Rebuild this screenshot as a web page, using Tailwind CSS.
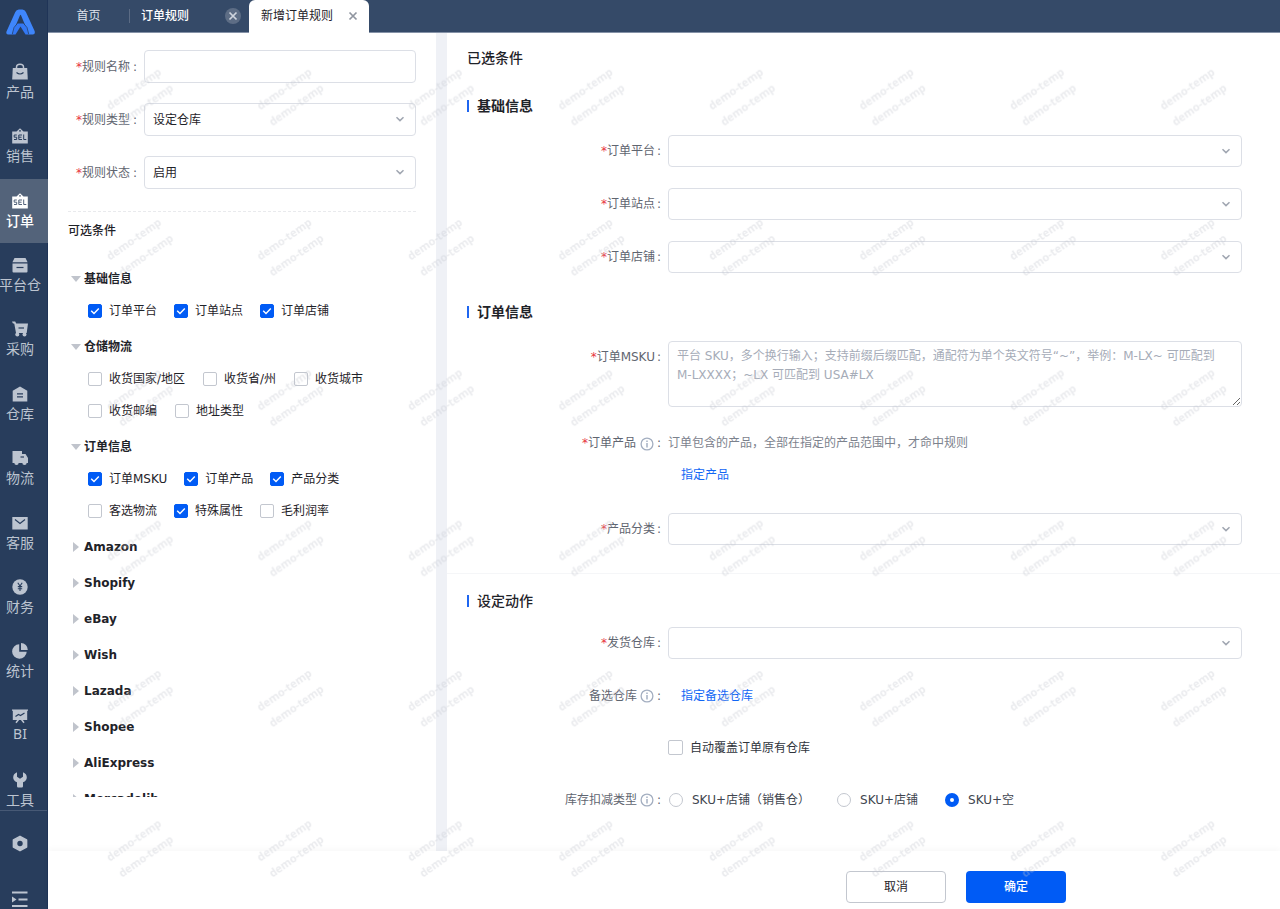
<!DOCTYPE html>
<html lang="zh-CN">
<head>
<meta charset="utf-8">
<meta name="viewport" content="width=device-width, initial-scale=1">
<title>新增订单规则</title>
<script src="https://cdn.jsdelivr.net/npm/@tailwindcss/browser@4"></script>
</head>
<body class="h-screen overflow-hidden bg-white font-['DejaVu_Sans','Noto_Sans_CJK_SC',sans-serif] text-xs text-[#1f2329]">

<svg class="hidden" aria-hidden="true">
  <symbol id="chev" viewBox="0 0 10 10"><path d="M1.5 3.2 5 6.6 8.5 3.2" fill="none" stroke="#a0a6b1" stroke-width="1.5"/></symbol>
  <symbol id="tick" viewBox="0 0 14 14"><path d="M3.2 6.8 6 9.6 10.8 4.6" fill="none" stroke="#fff" stroke-width="1.4"/></symbol>
  <symbol id="info" viewBox="0 0 14 14"><circle cx="7" cy="7" r="5.9" fill="none" stroke="#a3aec0" stroke-width="1.3"/><path d="M7 6v4.4M7 3.6v1.3" stroke="#98a5ba" stroke-width="1.3"/></symbol>
  <symbol id="down" viewBox="0 0 10 6"><path d="M0 0h10L5 6z" fill="#c0c4cc"/></symbol>
  <symbol id="right" viewBox="0 0 6 10"><path d="M0 0v10l6-5z" fill="#c0c4cc"/></symbol>
  <symbol id="cross" viewBox="0 0 10 10"><path d="M1.5 1.5l7 7M8.5 1.5l-7 7" fill="none" stroke="currentColor" stroke-width="1.7"/></symbol>
</svg>

<div class="flex h-full">
  <!-- Main navigation -->
  <aside class="flex w-12 shrink-0 flex-col border-r border-[#1f3457] bg-[#283d5c] text-sm leading-5 text-[#bcc4d0]">
    <a href="#" aria-label="首页" class="flex h-[50px] shrink-0 items-start px-[6px] pt-[9px]">
      <svg class="h-[26px] w-[29px]" viewBox="0 0 29 26"><path d="M0.5 22.5 9.300 3Q10.300 .5 12.800 .5h3.600q2.400 0 3.500 2.500L28.600 22q1 3.500-1.800 3.500h-3.800L15.100 6.400q-.6-1.200-1.200 0L6 25.500H2Q-.3 25.500.5 22.500z" fill="#3f86fb"/><path d="M6 25.500 7.800 18.500 11.500 14.500h6l3.700 4 1.800 7h-3.500l-5-8-5 8z" fill="#3378f4"/><path d="M11.300 14.500 8 18.500 6.300 25M17.700 14.500 21 18.500 22.700 25" fill="none" stroke="#283d5c" stroke-width=".7"/></svg>
    </a>
    <nav class="flex min-h-0 flex-1 flex-col justify-between">
      <a href="#" class="flex h-16 flex-col items-center pt-[13px] pr-[7px]"><svg class="h-[17px] w-4 shrink-0" viewBox="0 0 16 17" fill="currentColor"><path d="M0.800 5h14.400l.6 11.500H.2z"/><path d="M4.500 6V4.200a3.500 3 0 0 1 7 0V6" fill="none" stroke="currentColor" stroke-width="1.500"/><path d="M4.500 9.500q3.500 3 7 0" fill="none" stroke="#283d5c" stroke-width="1.200"/></svg><span class="mt-[2px]">产品</span></a>
      <a href="#" class="flex h-16 flex-col items-center pt-[13px] pr-[7px]"><svg class="h-[17px] w-4 shrink-0" viewBox="0 0 16 17" fill="currentColor"><path d="M.2 4.500h4.300L8 1.200l3.500 3.300h4.300v12H.2z"/><circle cx="8" cy="3.800" r=".9" fill="#283d5c"/><path d="M4.800 8H2.200v2.200h2.500v2.300H2M10 8H6.800v4.500H10M6.800 10.200h2.700M11.700 7.500v5h2.600" fill="none" stroke="#283d5c"/></svg><span class="mt-[2px]">销售</span></a>
      <a href="#" aria-current="page" class="-mr-px flex h-16 flex-col items-center bg-[#53637a] pt-[13px] pr-2 font-medium text-white"><svg class="h-[17px] w-4 shrink-0" viewBox="0 0 16 17" fill="currentColor"><path d="M.2 4.500h4.300L8 1.200l3.500 3.300h4.300v12H.2z"/><circle cx="8" cy="3.800" r=".9" fill="#53637a"/><path d="M4.800 8H2.200v2.200h2.500v2.300H2M10 8H6.800v4.500H10M6.800 10.200h2.700M11.700 7.500v5h2.600" fill="none" stroke="#53637a"/></svg><span class="mt-[2px]">订单</span></a>
      <a href="#" class="flex h-16 flex-col items-center pt-[13px] pr-[7px]"><svg class="h-[17px] w-4 shrink-0" viewBox="0 0 16 17" fill="currentColor"><path d="M2.500 2h11L15.600 6.200H.4zM.5 7.400h15v8q0 1-1 1h-13q-1 0-1-1z"/><path d="M4.500 11.500h7" stroke="#283d5c" stroke-width="1.200"/></svg><span class="mt-[2px] whitespace-nowrap">平台仓</span></a>
      <a href="#" class="flex h-16 flex-col items-center pt-[13px] pr-[7px]"><svg class="h-[17px] w-4 shrink-0" viewBox="0 0 16 17" fill="currentColor"><path d="M0 1.500h3.200l1 2H16l-1.300 9.500H4L2.300 3.700 .8 3.200z"/><circle cx="5.300" cy="14.500" r="2"/><circle cx="12.500" cy="14.500" r="2"/><path d="M6.500 8h5.500" stroke="#283d5c" stroke-width="1.200"/></svg><span class="mt-[2px]">采购</span></a>
      <a href="#" class="flex h-16 flex-col items-center pt-[13px] pr-[7px]"><svg class="h-[17px] w-4 shrink-0" viewBox="0 0 16 17" fill="currentColor"><path d="M8 1.500l7.300 4.200v10.800H.7V5.700z"/><path d="M5 8.800h6M5 11.800h6" stroke="#283d5c" stroke-width="1.200"/></svg><span class="mt-[2px]">仓库</span></a>
      <a href="#" class="flex h-16 flex-col items-center pt-[13px] pr-[7px]"><svg class="h-[17px] w-4 shrink-0" viewBox="0 0 16 17" fill="currentColor"><path d="M.5 2h9.500v3h3.500L16 9v5H.5z"/><circle cx="4.500" cy="13.800" r="2.200"/><circle cx="12.500" cy="13.800" r="2.200"/><path d="M8.500 8h3.500" stroke="#283d5c" stroke-width="1.200"/></svg><span class="mt-[2px]">物流</span></a>
      <a href="#" class="flex h-16 flex-col items-center pt-[13px] pr-[7px]"><svg class="h-[17px] w-4 shrink-0" viewBox="0 0 16 17" fill="currentColor"><path d="M.3 3h15.400v12.500H.3z"/><path d="M3 5.500l5 4 5-4" fill="none" stroke="#283d5c" stroke-width="1.200"/></svg><span class="mt-[2px]">客服</span></a>
      <a href="#" class="flex h-16 flex-col items-center pt-[13px] pr-[7px]"><svg class="h-[17px] w-4 shrink-0" viewBox="0 0 16 17" fill="currentColor"><circle cx="8" cy="9" r="7.700"/><path d="M5.800 4.800 8 8l2.200-3.200M8 8v5M5.800 8.600h4.400M5.800 10.800h4.400" fill="none" stroke="#283d5c" stroke-width="1.100"/></svg><span class="mt-[2px]">财务</span></a>
      <a href="#" class="flex h-16 flex-col items-center pt-[13px] pr-[7px]"><svg class="h-[17px] w-4 shrink-0" viewBox="0 0 16 17" fill="currentColor"><path d="M7.200 2.200v7.600h7.500A7.300 7.300 0 1 1 7.200 2.200z"/><path d="M9 1a7 7 0 0 1 6.800 7H9z"/></svg><span class="mt-[2px]">统计</span></a>
      <a href="#" class="flex h-16 flex-col items-center pt-[13px] pr-[7px]"><svg class="h-[17px] w-4 shrink-0" viewBox="0 0 16 17" fill="currentColor"><path d="M0 2.500h16v1.300h-.8V13H.8V3.800H0z"/><path d="M6.500 12.500 4 15.800M9.500 12.500l2.500 3.300" stroke="currentColor" stroke-width="1.500"/><path d="M3.500 9.500 6.500 7.500l2 1L12.500 6" fill="none" stroke="#283d5c" stroke-width="1.100"/></svg><span class="font-['Noto_Sans',sans-serif]">BI</span></a>
      <a href="#" class="flex h-[52px] flex-col items-center pt-[13px] pr-[7px]"><svg class="h-[17px] w-4 shrink-0" viewBox="0 0 16 17" fill="currentColor"><path d="M5 1.200v4.600l3 1.900 3-1.900V1.200q3.800 1.600 3.800 5.200 0 3.200-3.800 4.800v4q0 1.300-1.300 1.300H6.300Q5 16.500 5 15.200v-4Q1.200 9.600 1.200 6.400 1.200 2.800 5 1.200z"/></svg><span class="mt-[2px]">工具</span></a>
    </nav>
    <div class="flex h-[99px] shrink-0 flex-col items-center border-t border-[#475975] pr-[7px]">
      <button type="button" aria-label="设置" class="flex h-16 w-full shrink-0 items-center justify-center"><svg class="h-[17px] w-4" viewBox="0 0 16 17"><path d="M8 1.300l6.600 3.600v7.200L8 15.700l-6.600-3.600V4.900z" fill="currentColor" stroke="currentColor" stroke-width="1.500" stroke-linejoin="round"/><circle cx="8" cy="8.500" r="2.700" fill="#283d5c"/></svg></button>
      <button type="button" aria-label="展开菜单" class="mt-4 w-[17px]"><svg class="h-4 w-[17px]" viewBox="0 0 17 16"><path d="M0 1.500h15.500M6.500 8.500h9M0 15h15.500" stroke="currentColor" stroke-width="2"/><path d="M0 5.500v6l4.500-3z" fill="currentColor"/></svg></button>
    </div>
  </aside>

  <div class="flex min-w-0 flex-1 flex-col">
    <!-- Page tabs -->
    <header class="flex h-[33px] shrink-0 border-b border-[#8592a7] bg-[#354a68] text-white">
      <a href="#" class="flex w-[81px] items-center justify-center text-[#dfe4ec]">首页</a>
      <div class="flex w-[120px] items-center justify-between pr-2">
        <span class="h-[14px] w-px bg-[#5b6b84]"></span>
        <a href="#" class="mr-auto ml-[11px] font-medium">订单规则</a>
        <button type="button" aria-label="关闭 订单规则" class="flex size-4 items-center justify-center rounded-full bg-[#5d6d85] text-[#cfd5de]"><svg class="size-[10px]"><use href="#cross"/></svg></button>
      </div>
      <div class="-mb-px flex w-[120px] items-center justify-between rounded-t-md bg-white pr-[11px] pb-px pl-3 text-[#1f2329]">
        <a href="#" aria-current="page">新增订单规则</a>
        <button type="button" aria-label="关闭 新增订单规则" class="text-[#9096a0]"><svg class="size-[10px]"><use href="#cross"/></svg></button>
      </div>
    </header>

    <form class="flex min-h-0 flex-1 flex-col">
      <div class="flex min-h-0 flex-1">
        <!-- Rule settings and available conditions -->
        <section class="flex w-[388px] shrink-0 flex-col pt-[17px] pr-5 pb-[54px] pl-5">
          <div class="flex flex-col gap-5 text-[#5f6570]">
            <div class="flex items-center"><label for="rname" class="w-[76px] shrink-0 pr-[7px] text-right whitespace-nowrap"><span class="text-[#e8353e]">*</span>规则名称<span class="ml-[3px]">:</span></label><input id="rname" type="text" class="h-[33px] min-w-0 flex-1 rounded border border-[#dcdfe6] px-2 text-[#1f2329]"></div>
            <div class="flex items-center"><label for="rtype" class="w-[76px] shrink-0 pr-[7px] text-right whitespace-nowrap"><span class="text-[#e8353e]">*</span>规则类型<span class="ml-[3px]">:</span></label><div class="relative flex-1"><select id="rtype" class="block h-[33px] w-full appearance-none rounded border border-[#dcdfe6] bg-white px-2 text-[#1f2329]"><option>设定仓库</option></select><svg class="pointer-events-none absolute top-[11px] right-[11px] size-[10px]"><use href="#chev"/></svg></div></div>
            <div class="flex items-center"><label for="rstate" class="w-[76px] shrink-0 pr-[7px] text-right whitespace-nowrap"><span class="text-[#e8353e]">*</span>规则状态<span class="ml-[3px]">:</span></label><div class="relative flex-1"><select id="rstate" class="block h-[33px] w-full appearance-none rounded border border-[#dcdfe6] bg-white px-2 text-[#1f2329]"><option>启用</option></select><svg class="pointer-events-none absolute top-[11px] right-[11px] size-[10px]"><use href="#chev"/></svg></div></div>
          </div>
          <h2 class="mt-[22px] h-12 shrink-0 border-t border-dashed border-[#e9eaed] pt-[9px] leading-5 font-medium">可选条件</h2>

          <div class="min-h-0 flex-1 overflow-hidden">
            <button type="button" class="flex h-9 items-center gap-[3px] pt-1 pl-[3px] font-bold"><svg class="h-[6px] w-[10px]"><use href="#down"/></svg>基础信息</button>
            <div class="flex flex-wrap gap-x-[17px] pl-5 leading-8">
              <label class="flex items-center gap-[7px]"><span class="relative size-[14px]"><input type="checkbox" checked class="peer block size-[14px] appearance-none rounded-xs border border-[#c3c7cf] checked:border-[#005bf5] checked:bg-[#005bf5]"><svg class="pointer-events-none absolute inset-0 hidden size-[14px] peer-checked:block"><use href="#tick"/></svg></span>订单平台</label>
              <label class="flex items-center gap-[7px]"><span class="relative size-[14px]"><input type="checkbox" checked class="peer block size-[14px] appearance-none rounded-xs border border-[#c3c7cf] checked:border-[#005bf5] checked:bg-[#005bf5]"><svg class="pointer-events-none absolute inset-0 hidden size-[14px] peer-checked:block"><use href="#tick"/></svg></span>订单站点</label>
              <label class="flex items-center gap-[7px]"><span class="relative size-[14px]"><input type="checkbox" checked class="peer block size-[14px] appearance-none rounded-xs border border-[#c3c7cf] checked:border-[#005bf5] checked:bg-[#005bf5]"><svg class="pointer-events-none absolute inset-0 hidden size-[14px] peer-checked:block"><use href="#tick"/></svg></span>订单店铺</label>
            </div>
            <button type="button" class="flex h-9 items-center gap-[3px] pt-1 pl-[3px] font-bold"><svg class="h-[6px] w-[10px]"><use href="#down"/></svg>仓储物流</button>
            <div class="flex flex-wrap gap-x-[18px] pl-5 leading-8">
              <label class="flex items-center gap-[7px]"><span class="relative size-[14px]"><input type="checkbox" class="peer block size-[14px] appearance-none rounded-xs border border-[#c3c7cf] checked:border-[#005bf5] checked:bg-[#005bf5]"><svg class="pointer-events-none absolute inset-0 hidden size-[14px] peer-checked:block"><use href="#tick"/></svg></span>收货国家/地区</label>
              <label class="flex items-center gap-[7px]"><span class="relative size-[14px]"><input type="checkbox" class="peer block size-[14px] appearance-none rounded-xs border border-[#c3c7cf] checked:border-[#005bf5] checked:bg-[#005bf5]"><svg class="pointer-events-none absolute inset-0 hidden size-[14px] peer-checked:block"><use href="#tick"/></svg></span>收货省/州</label>
              <label class="flex items-center gap-[7px]"><span class="relative size-[14px]"><input type="checkbox" class="peer block size-[14px] appearance-none rounded-xs border border-[#c3c7cf] checked:border-[#005bf5] checked:bg-[#005bf5]"><svg class="pointer-events-none absolute inset-0 hidden size-[14px] peer-checked:block"><use href="#tick"/></svg></span>收货城市</label>
              <label class="flex items-center gap-[7px]"><span class="relative size-[14px]"><input type="checkbox" class="peer block size-[14px] appearance-none rounded-xs border border-[#c3c7cf] checked:border-[#005bf5] checked:bg-[#005bf5]"><svg class="pointer-events-none absolute inset-0 hidden size-[14px] peer-checked:block"><use href="#tick"/></svg></span>收货邮编</label>
              <label class="flex items-center gap-[7px]"><span class="relative size-[14px]"><input type="checkbox" class="peer block size-[14px] appearance-none rounded-xs border border-[#c3c7cf] checked:border-[#005bf5] checked:bg-[#005bf5]"><svg class="pointer-events-none absolute inset-0 hidden size-[14px] peer-checked:block"><use href="#tick"/></svg></span>地址类型</label>
            </div>
            <button type="button" class="flex h-9 items-center gap-[3px] pt-1 pl-[3px] font-bold"><svg class="h-[6px] w-[10px]"><use href="#down"/></svg>订单信息</button>
            <div class="flex flex-wrap gap-x-[17px] pl-5 leading-8">
              <label class="flex items-center gap-[7px]"><span class="relative size-[14px]"><input type="checkbox" checked class="peer block size-[14px] appearance-none rounded-xs border border-[#c3c7cf] checked:border-[#005bf5] checked:bg-[#005bf5]"><svg class="pointer-events-none absolute inset-0 hidden size-[14px] peer-checked:block"><use href="#tick"/></svg></span>订单MSKU</label>
              <label class="flex items-center gap-[7px]"><span class="relative size-[14px]"><input type="checkbox" checked class="peer block size-[14px] appearance-none rounded-xs border border-[#c3c7cf] checked:border-[#005bf5] checked:bg-[#005bf5]"><svg class="pointer-events-none absolute inset-0 hidden size-[14px] peer-checked:block"><use href="#tick"/></svg></span>订单产品</label>
              <label class="flex items-center gap-[7px]"><span class="relative size-[14px]"><input type="checkbox" checked class="peer block size-[14px] appearance-none rounded-xs border border-[#c3c7cf] checked:border-[#005bf5] checked:bg-[#005bf5]"><svg class="pointer-events-none absolute inset-0 hidden size-[14px] peer-checked:block"><use href="#tick"/></svg></span>产品分类</label>
              <label class="flex items-center gap-[7px]"><span class="relative size-[14px]"><input type="checkbox" class="peer block size-[14px] appearance-none rounded-xs border border-[#c3c7cf] checked:border-[#005bf5] checked:bg-[#005bf5]"><svg class="pointer-events-none absolute inset-0 hidden size-[14px] peer-checked:block"><use href="#tick"/></svg></span>客选物流</label>
              <label class="flex items-center gap-[7px]"><span class="relative size-[14px]"><input type="checkbox" checked class="peer block size-[14px] appearance-none rounded-xs border border-[#c3c7cf] checked:border-[#005bf5] checked:bg-[#005bf5]"><svg class="pointer-events-none absolute inset-0 hidden size-[14px] peer-checked:block"><use href="#tick"/></svg></span>特殊属性</label>
              <label class="flex items-center gap-[7px]"><span class="relative size-[14px]"><input type="checkbox" class="peer block size-[14px] appearance-none rounded-xs border border-[#c3c7cf] checked:border-[#005bf5] checked:bg-[#005bf5]"><svg class="pointer-events-none absolute inset-0 hidden size-[14px] peer-checked:block"><use href="#tick"/></svg></span>毛利润率</label>
            </div>
            <button type="button" class="flex h-9 items-center gap-[5px] pt-1 pl-[5px] font-bold"><svg class="h-[10px] w-[6px]"><use href="#right"/></svg>Amazon</button>
            <button type="button" class="flex h-9 items-center gap-[5px] pt-1 pl-[5px] font-bold"><svg class="h-[10px] w-[6px]"><use href="#right"/></svg>Shopify</button>
            <button type="button" class="flex h-9 items-center gap-[5px] pt-1 pl-[5px] font-bold"><svg class="h-[10px] w-[6px]"><use href="#right"/></svg>eBay</button>
            <button type="button" class="flex h-9 items-center gap-[5px] pt-1 pl-[5px] font-bold"><svg class="h-[10px] w-[6px]"><use href="#right"/></svg>Wish</button>
            <button type="button" class="flex h-9 items-center gap-[5px] pt-1 pl-[5px] font-bold"><svg class="h-[10px] w-[6px]"><use href="#right"/></svg>Lazada</button>
            <button type="button" class="flex h-9 items-center gap-[5px] pt-1 pl-[5px] font-bold"><svg class="h-[10px] w-[6px]"><use href="#right"/></svg>Shopee</button>
            <button type="button" class="flex h-9 items-center gap-[5px] pt-1 pl-[5px] font-bold"><svg class="h-[10px] w-[6px]"><use href="#right"/></svg>AliExpress</button>
            <button type="button" class="flex h-9 items-center gap-[5px] pt-1 pl-[5px] font-bold"><svg class="h-[10px] w-[6px]"><use href="#right"/></svg>Mercadolib</button>
          </div>
        </section>

        <div class="w-[11px] shrink-0 bg-[#eff1f6]"></div>

        <!-- Selected conditions -->
        <section class="min-w-0 flex-1 overflow-hidden text-[#5f6570]">
          <h2 class="pl-5 text-sm leading-[50px] font-medium text-[#1f2329]">已选条件</h2>
          <h3 class="flex h-[46px] items-center gap-2 pl-5 text-sm font-bold text-[#1f2329]"><span class="h-3 w-[2px] bg-[#1f66f0]"></span>基础信息</h3>
          <div class="flex flex-col gap-[21px] pt-[6px] pr-[38px]">
            <div class="flex items-center"><label for="plat" class="w-[221px] shrink-0 pr-[7px] text-right"><span class="text-[#e8353e]">*</span>订单平台<span class="ml-[2px]">:</span></label><div class="relative flex-1"><select id="plat" class="block h-8 w-full appearance-none rounded border border-[#dcdfe6] bg-white px-2"><option></option></select><svg class="pointer-events-none absolute top-[11px] right-[11px] size-[10px]"><use href="#chev"/></svg></div></div>
            <div class="flex items-center"><label for="site" class="w-[221px] shrink-0 pr-[7px] text-right"><span class="text-[#e8353e]">*</span>订单站点<span class="ml-[2px]">:</span></label><div class="relative flex-1"><select id="site" class="block h-8 w-full appearance-none rounded border border-[#dcdfe6] bg-white px-2"><option></option></select><svg class="pointer-events-none absolute top-[11px] right-[11px] size-[10px]"><use href="#chev"/></svg></div></div>
            <div class="flex items-center"><label for="shop" class="w-[221px] shrink-0 pr-[7px] text-right"><span class="text-[#e8353e]">*</span>订单店铺<span class="ml-[2px]">:</span></label><div class="relative flex-1"><select id="shop" class="block h-8 w-full appearance-none rounded border border-[#dcdfe6] bg-white px-2"><option></option></select><svg class="pointer-events-none absolute top-[11px] right-[11px] size-[10px]"><use href="#chev"/></svg></div></div>
          </div>

          <h3 class="mt-4 flex h-[46px] items-center gap-2 pl-5 text-sm font-bold text-[#1f2329]"><span class="h-3 w-[2px] bg-[#1f66f0]"></span>订单信息</h3>
          <div class="flex flex-col gap-[21px] pt-[6px] pr-[38px]">
            <div class="flex items-start"><label for="msku" class="w-[221px] shrink-0 pr-[7px] text-right leading-8"><span class="text-[#e8353e]">*</span>订单MSKU<span class="ml-[2px]">:</span></label><textarea id="msku" class="block h-[66px] min-w-0 flex-1 resize rounded border border-[#dcdfe6] px-2 py-[5px] leading-[19px] text-[#1f2329] placeholder:text-[#a6acb8]" placeholder="平台 SKU，多个换行输入；支持前缀后缀匹配，通配符为单个英文符号“~”，举例：M-LX~ 可匹配到 M-LXXXX；~LX 可匹配到 USA#LX"></textarea></div>
            <div class="flex items-start"><span class="flex w-[221px] shrink-0 items-center justify-end pr-[7px] leading-[31px]"><span class="text-[#e8353e]">*</span>订单产品<svg class="mr-[3px] ml-1 size-[14px]"><use href="#info"/></svg>:</span><div><p class="leading-[31px] text-[#7c828d]">订单包含的产品，全部在指定的产品范围中，才命中规则</p><a href="#" class="block pl-[13px] leading-[33px] text-[#1166f5]">指定产品</a></div></div>
            <div class="flex items-center"><label for="cat" class="w-[221px] shrink-0 pr-[7px] text-right"><span class="text-[#e8353e]">*</span>产品分类<span class="ml-[2px]">:</span></label><div class="relative flex-1"><select id="cat" class="block h-8 w-full appearance-none rounded border border-[#dcdfe6] bg-white px-2"><option></option></select><svg class="pointer-events-none absolute top-[11px] right-[11px] size-[10px]"><use href="#chev"/></svg></div></div>
          </div>

          <div class="mt-7 border-t border-[#f5f6f8] pt-1">
            <h3 class="flex h-[46px] items-center gap-2 pl-5 text-sm font-medium text-[#1f2329]"><span class="h-3 w-[2px] bg-[#1f66f0]"></span>设定动作</h3>
            <div class="flex flex-col gap-[21px] pt-[3px] pr-[38px]">
              <div class="flex items-center"><label for="wh" class="w-[221px] shrink-0 pr-[7px] text-right"><span class="text-[#e8353e]">*</span>发货仓库<span class="ml-[2px]">:</span></label><div class="relative flex-1"><select id="wh" class="block h-8 w-full appearance-none rounded border border-[#dcdfe6] bg-white px-2"><option></option></select><svg class="pointer-events-none absolute top-[11px] right-[11px] size-[10px]"><use href="#chev"/></svg></div></div>
              <div class="flex h-[31px] items-center"><span class="flex w-[221px] shrink-0 items-center justify-end pr-[7px]">备选仓库<svg class="mx-[3px] size-[14px]"><use href="#info"/></svg>:</span><a href="#" class="pl-[13px] text-[#1166f5]">指定备选仓库</a></div>
              <div class="flex h-[31px] items-center pl-[221px] text-[#2f343c]"><label class="flex items-center gap-[7px]"><input type="checkbox" class="size-[15px] appearance-none rounded-xs border border-[#c3c7cf] checked:bg-[#005bf5]">自动覆盖订单原有仓库</label></div>
              <div class="flex h-[31px] items-center"><span class="flex w-[221px] shrink-0 items-center justify-end pr-[7px]">库存扣减类型<svg class="mx-[3px] size-[14px]"><use href="#info"/></svg>:</span>
                <div role="radiogroup" aria-label="库存扣减类型" class="flex gap-[27px] pl-px text-[#40454e]">
                  <label class="flex items-center gap-[9px]"><input type="radio" name="stock" class="size-[14px] appearance-none rounded-full border border-[#c3c7cf] bg-white checked:border-[5px] checked:border-[#005bf5]">SKU+店铺（销售仓）</label>
                  <label class="flex items-center gap-[9px]"><input type="radio" name="stock" class="size-[14px] appearance-none rounded-full border border-[#c3c7cf] bg-white checked:border-[5px] checked:border-[#005bf5]">SKU+店铺</label>
                  <label class="flex items-center gap-[9px]"><input type="radio" name="stock" checked class="size-[14px] appearance-none rounded-full border border-[#c3c7cf] bg-white checked:border-[5px] checked:border-[#005bf5]">SKU+空</label>
                </div>
              </div>
            </div>
          </div>
        </section>
      </div>

      <footer class="flex h-[58px] shrink-0 items-start justify-end gap-5 bg-white pt-5 pr-[214px] shadow-[0_-2px_6px_rgba(0,0,0,0.03)]">
        <button type="button" class="h-[32px] w-[100px] rounded border border-[#c3c7cf] bg-white text-[#1f2329]">取消</button>
        <button type="submit" class="h-[32px] w-[100px] rounded bg-[#005bf5] font-medium text-white">确定</button>
      </footer>
    </form>
  </div>
</div>

<!-- Account watermark laid over the content area -->
<div class="pointer-events-none absolute inset-y-0 right-0 left-12" aria-hidden="true">
  <svg class="size-full">
    <defs>
      <pattern id="wm" x="11" y="20" width="150.5" height="150.300" patternUnits="userSpaceOnUse">
        <g class="font-['Noto_Sans',sans-serif] text-[11px] font-bold" fill="#c2c6cf" fill-opacity=".34" text-anchor="middle">
          <text transform="translate(77 72) rotate(-35)">demo-temp</text>
          <text transform="translate(89 88) rotate(-35)">demo-temp</text>
        </g>
      </pattern>
    </defs>
    <rect width="100%" height="100%" fill="url(#wm)"/>
  </svg>
</div>
</body>
</html>
